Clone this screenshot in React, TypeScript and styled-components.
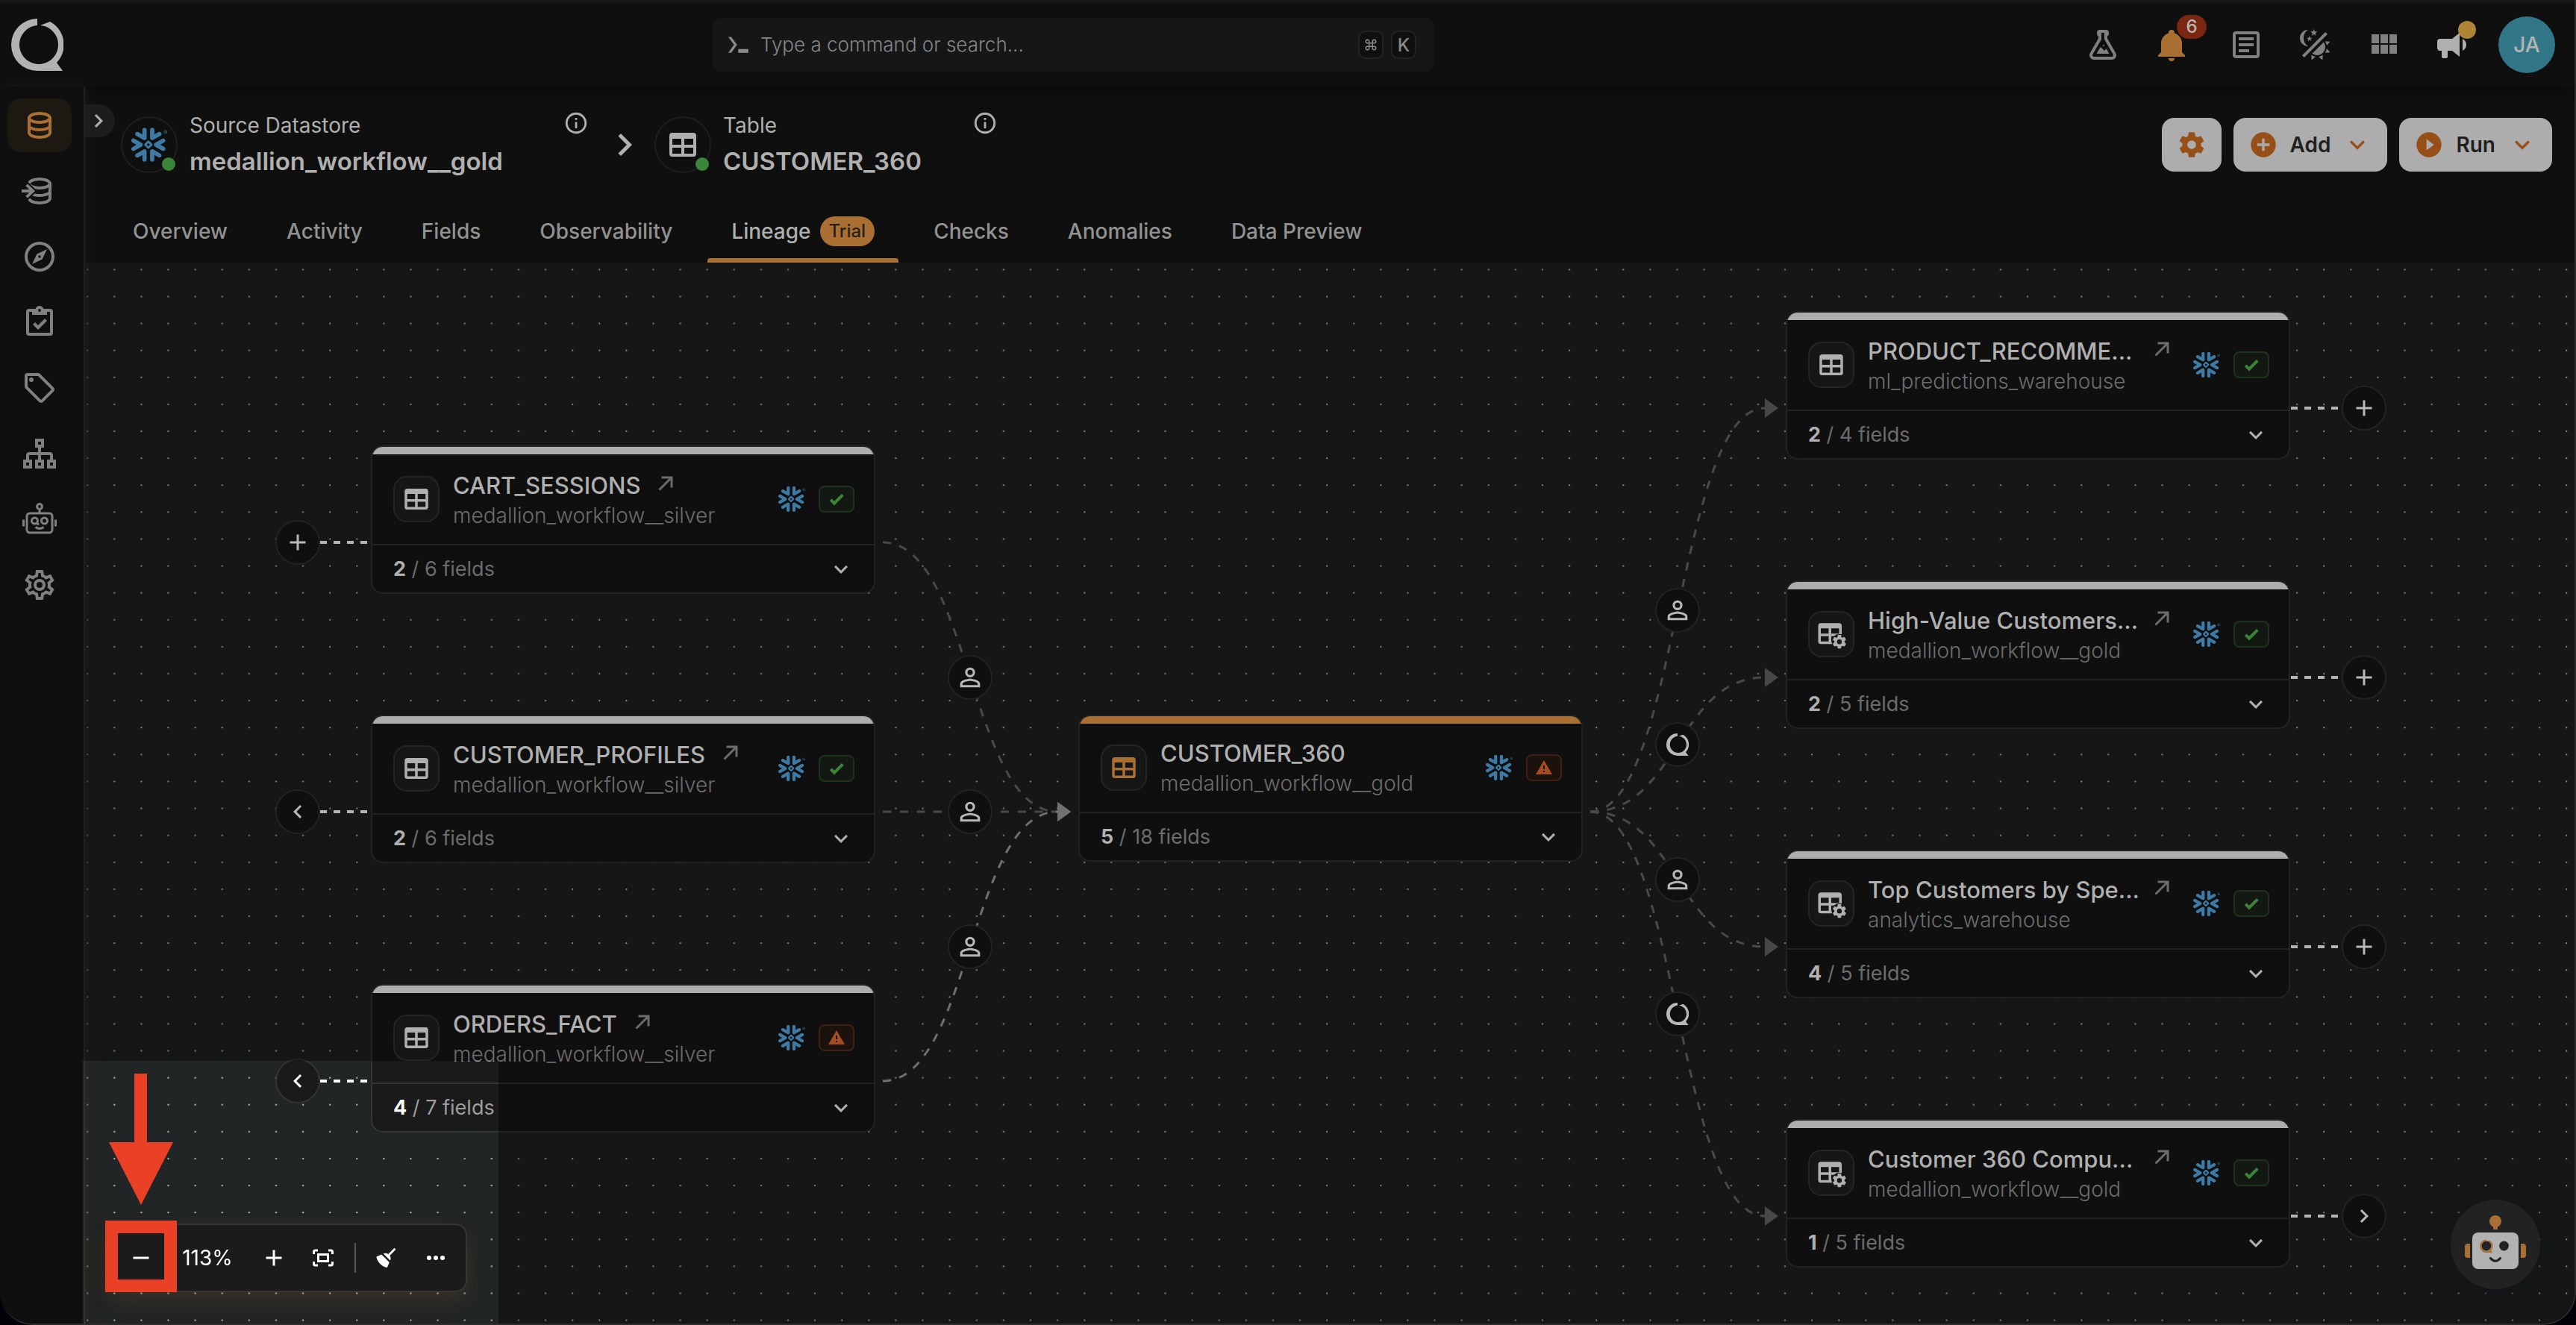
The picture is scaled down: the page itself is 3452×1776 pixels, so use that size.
import React from "react";
import styled, { createGlobalStyle, css } from "styled-components";
import { Command } from "lucide-react";
import { SiSnowflake } from "react-icons/si";

const c = {
  surface: "#0f0f0f",
  canvas: "#151716",
  line: "#222222",
  text: "#b0b0b0",
  muted: "#8a8a8a",
  faint: "#6c6c6c",
  accent: "#aa6f33",
  accentDeep: "#964f17",
  snow: "#3d7ba6",
  green: "#3b8438",
  rust: "#a44d22",
};

const GlobalStyle = createGlobalStyle`
  *, *::before, *::after { box-sizing: border-box; }
  html, body { margin: 0; background: #020208; }
  body, button, input { font-family: Inter, "Noto Sans", "Liberation Sans", sans-serif; }
  button { border: 0; padding: 0; margin: 0; background: none; color: inherit; cursor: pointer; }
  a { color: inherit; text-decoration: none; }
  svg { display: block; flex: none; }
`;

/* ---------- icons ---------- */

const paths = {
  database:
    "M12 3C7.58 3 4 4.79 4 7V17C4 19.21 7.59 21 12 21S20 19.21 20 17V7C20 4.79 16.42 3 12 3M18 17C18 17.5 15.87 19 12 19S6 17.5 6 17V14.77C7.61 15.55 9.72 16 12 16S16.39 15.55 18 14.77V17M18 12.45C16.7 13.4 14.42 14 12 14C9.58 14 7.3 13.4 6 12.45V9.64C7.47 10.47 9.61 11 12 11C14.39 11 16.53 10.47 18 9.64V12.45M12 9C8.13 9 6 7.5 6 7S8.13 5 12 5C15.87 5 18 6.5 18 7S15.87 9 12 9Z",
  compass:
    "M7,17L10.2,10.2L17,7L13.8,13.8L7,17M12,11.1A0.9,0.9 0 0,0 11.1,12A0.9,0.9 0 0,0 12,12.9A0.9,0.9 0 0,0 12.9,12A0.9,0.9 0 0,0 12,11.1M12,2A10,10 0 0,1 22,12A10,10 0 0,1 12,22A10,10 0 0,1 2,12A10,10 0 0,1 12,2M12,4A8,8 0 0,0 4,12A8,8 0 0,0 12,20A8,8 0 0,0 20,12A8,8 0 0,0 12,4Z",
  clipboard:
    "M19,3H14.82C14.4,1.84 13.3,1 12,1C10.7,1 9.6,1.84 9.18,3H5A2,2 0 0,0 3,5V19A2,2 0 0,0 5,21H19A2,2 0 0,0 21,19V5A2,2 0 0,0 19,3M12,3A1,1 0 0,1 13,4A1,1 0 0,1 12,5A1,1 0 0,1 11,4A1,1 0 0,1 12,3M7,7H17V5H19V19H5V5H7V7M7.5,13.5L9,12L11,14L15.5,9.5L17,11L11,17L7.5,13.5Z",
  tag: "M21.41 11.58L12.41 2.58A2 2 0 0 0 11 2H4A2 2 0 0 0 2 4V11A2 2 0 0 0 2.59 12.42L11.59 21.42A2 2 0 0 0 13 22A2 2 0 0 0 14.41 21.41L21.41 14.41A2 2 0 0 0 22 13A2 2 0 0 0 21.41 11.58M13 20L4 11V4H11L20 13M6.5 5A1.5 1.5 0 1 1 5 6.5A1.5 1.5 0 0 1 6.5 5Z",
  sitemap:
    "M9,2V8H11V11H5C3.89,11 3,11.89 3,13V16H1V22H7V16H5V13H11V16H9V22H15V16H13V13H19V16H17V22H23V16H21V13C21,11.89 20.11,11 19,11H13V8H15V2H9M11,4H13V6H11V4M3,18H5V20H3V18M11,18H13V20H11V18M19,18H21V20H19V18Z",
  cogOutline:
    "M12,8A4,4 0 0,1 16,12A4,4 0 0,1 12,16A4,4 0 0,1 8,12A4,4 0 0,1 12,8M12,10A2,2 0 0,0 10,12A2,2 0 0,0 12,14A2,2 0 0,0 14,12A2,2 0 0,0 12,10M10,22C9.75,22 9.54,21.82 9.5,21.58L9.13,18.93C8.5,18.68 7.96,18.34 7.44,17.94L4.95,18.95C4.73,19.03 4.46,18.95 4.34,18.73L2.34,15.27C2.21,15.05 2.27,14.78 2.46,14.63L4.57,12.97L4.5,12L4.57,11L2.46,9.37C2.27,9.22 2.21,8.95 2.34,8.73L4.34,5.27C4.46,5.05 4.73,4.96 4.95,5.05L7.44,6.05C7.96,5.66 8.5,5.32 9.13,5.07L9.5,2.42C9.54,2.18 9.75,2 10,2H14C14.25,2 14.46,2.18 14.5,2.42L14.87,5.07C15.5,5.32 16.04,5.66 16.56,6.05L19.05,5.05C19.27,4.96 19.54,5.05 19.66,5.27L21.66,8.73C21.79,8.95 21.73,9.22 21.54,9.37L19.43,11L19.5,12L19.43,13L21.54,14.63C21.73,14.78 21.79,15.05 21.66,15.27L19.66,18.73C19.54,18.95 19.27,19.04 19.05,18.95L16.56,17.95C16.04,18.34 15.5,18.68 14.87,18.93L14.5,21.58C14.46,21.82 14.25,22 14,22H10M11.25,4L10.88,6.61C9.68,6.86 8.62,7.5 7.85,8.39L5.44,7.35L4.69,8.65L6.8,10.2C6.4,11.37 6.4,12.64 6.8,13.8L4.68,15.36L5.43,16.66L7.86,15.62C8.63,16.5 9.68,17.14 10.87,17.38L11.24,20H12.76L13.13,17.39C14.32,17.14 15.37,16.5 16.14,15.62L18.57,16.66L19.32,15.36L17.2,13.81C17.6,12.64 17.6,11.37 17.2,10.2L19.31,8.65L18.56,7.35L16.15,8.39C15.38,7.5 14.32,6.86 13.12,6.62L12.75,4H11.25Z",
  cog: "M12,15.5A3.5,3.5 0 0,1 8.5,12A3.5,3.5 0 0,1 12,8.5A3.5,3.5 0 0,1 15.5,12A3.5,3.5 0 0,1 12,15.5M19.43,12.97C19.47,12.65 19.5,12.33 19.5,12C19.5,11.67 19.47,11.34 19.43,11L21.54,9.37C21.73,9.22 21.78,8.95 21.66,8.73L19.66,5.27C19.54,5.05 19.27,4.96 19.05,5.05L16.56,6.05C16.04,5.66 15.5,5.32 14.87,5.07L14.5,2.42C14.46,2.18 14.25,2 14,2H10C9.75,2 9.54,2.18 9.5,2.42L9.13,5.07C8.5,5.32 7.96,5.66 7.44,6.05L4.95,5.05C4.73,4.96 4.46,5.05 4.34,5.27L2.34,8.73C2.21,8.95 2.27,9.22 2.46,9.37L4.57,11C4.53,11.34 4.5,11.67 4.5,12C4.5,12.33 4.53,12.65 4.57,12.97L2.46,14.63C2.27,14.78 2.21,15.05 2.34,15.27L4.34,18.73C4.46,18.95 4.73,19.03 4.95,18.95L7.44,17.94C7.96,18.34 8.5,18.68 9.13,18.93L9.5,21.58C9.54,21.82 9.75,22 10,22H14C14.25,22 14.46,21.82 14.5,21.58L14.87,18.93C15.5,18.67 16.04,18.34 16.56,17.94L19.05,18.95C19.27,19.03 19.54,18.95 19.66,18.73L21.66,15.27C21.78,15.05 21.73,14.78 21.54,14.63L19.43,12.97Z",
  bell: "M21,19V20H3V19L5,17V11C5,7.9 7.03,5.17 10,4.29C10,4.19 10,4.1 10,4A2,2 0 0,1 12,2A2,2 0 0,1 14,4C14,4.1 14,4.19 14,4.29C16.97,5.17 19,7.9 19,11V17L21,19M14,21A2,2 0 0,1 12,23A2,2 0 0,1 10,21",
  table:
    "M5,4H19A2,2 0 0,1 21,6V18A2,2 0 0,1 19,20H5A2,2 0 0,1 3,18V6A2,2 0 0,1 5,4M5,8V12H11V8H5M13,8V12H19V8H13M5,14V18H11V14H5M13,14V18H19V14H13Z",
  textBox:
    "M5,3C3.89,3 3,3.89 3,5V19C3,20.11 3.89,21 5,21H19C20.11,21 21,20.11 21,19V5C21,3.89 20.11,3 19,3H5M5,5H19V19H5V5M7,7V9H17V7H7M7,11V13H17V11H7M7,15V17H14V15H7Z",
  module: "M16,5V11H21V5M10,11H15V5H10M16,18H21V12H16M10,18H15V12H10M4,18H9V12H4M4,11H9V5H4V11Z",
  bullhorn:
    "M12,8H4A2,2 0 0,0 2,10V14A2,2 0 0,0 4,16H5V20A1,1 0 0,0 6,21H8A1,1 0 0,0 9,20V16H12L17,20V4L12,8M21.5,12C21.5,13.71 20.54,15.26 19,16V8C20.53,8.75 21.5,10.3 21.5,12Z",
  flask:
    "M5,19A1,1 0 0,0 6,20H18A1,1 0 0,0 19,19C19,18.79 18.93,18.59 18.82,18.43L13,8.35V4H11V8.35L5.18,18.43C5.07,18.59 5,18.79 5,19M6,22A3,3 0 0,1 3,19C3,18.4 3.18,17.84 3.5,17.37L9,7.81V6A1,1 0 0,1 8,5V4A2,2 0 0,1 10,2H14A2,2 0 0,1 16,4V5A1,1 0 0,1 15,6V7.81L20.5,17.37C20.82,17.84 21,18.4 21,19A3,3 0 0,1 18,22H6M13,16L14.34,14.66L16.27,18H7.73L10.39,13.39L13,16M12.5,12A0.5,0.5 0 0,1 13,12.5A0.5,0.5 0 0,1 12.5,13A0.5,0.5 0 0,1 12,12.5A0.5,0.5 0 0,1 12.5,12Z",
  theme:
    "M7.5,2C5.71,3.15 4.5,5.18 4.5,7.5C4.5,9.82 5.71,11.85 7.53,13C4.46,13 2,10.54 2,7.5A5.5,5.5 0 0,1 7.5,2M19.07,3.5L20.5,4.93L4.93,20.5L3.5,19.07L19.07,3.5M12.89,5.93L11.41,5L9.97,6L10.39,4.3L9,3.24L10.75,3.12L11.33,1.47L12,3.1L13.73,3.13L12.38,4.26L12.89,5.93M9.59,9.54L8.43,8.81L7.31,9.59L7.65,8.27L6.56,7.44L7.92,7.35L8.37,6.06L8.88,7.33L10.24,7.36L9.19,8.23L9.59,9.54M19,13.5A5.5,5.5 0 0,1 13.5,19C12.28,19 11.15,18.6 10.24,17.93L17.93,10.24C18.6,11.15 19,12.28 19,13.5M14.6,20.08L17.37,18.93L17.13,22.28L14.6,20.08M18.93,17.38L20.08,14.61L22.28,17.15L18.93,17.38M20.08,12.42L18.94,9.64L22.28,9.88L20.08,12.42M9.63,18.93L12.4,20.08L9.87,22.27L9.63,18.93Z",
  prompt: "M2 4.5H4.9L10.4 12L4.9 19.5H2L7.5 12L2 4.5M11.5 16H21V19.5H11.5V16Z",
  plusCircle:
    "M17,13H13V17H11V13H7V11H11V7H13V11H17M12,2A10,10 0 0,0 2,12A10,10 0 0,0 12,22A10,10 0 0,0 22,12A10,10 0 0,0 12,2Z",
  playCircle: "M10,16.5V7.5L16,12M12,2A10,10 0 0,0 2,12A10,10 0 0,0 12,22A10,10 0 0,0 22,12A10,10 0 0,0 12,2Z",
  chevronDown: "M7.41,8.58L12,13.17L16.59,8.58L18,10L12,16L6,10L7.41,8.58Z",
  chevronRight: "M8.59,16.58L13.17,12L8.59,7.41L10,6L16,12L10,18L8.59,16.58Z",
  chevronLeft: "M15.41,16.58L10.83,12L15.41,7.41L14,6L8,12L14,18L15.41,16.58Z",
  plus: "M19,13H13V19H11V13H5V11H11V5H13V11H19V13Z",
  minus: "M19,13H5V11H19V13Z",
  check: "M9,20.42L2.79,14.21L5.62,11.38L9,14.77L18.88,4.88L21.71,7.71L9,20.42Z",
  alert: "M13 14H11V9H13M13 18H11V16H13M1 21H23L12 2L1 21Z",
  info: "M11,9H13V7H11M12,20C7.59,20 4,16.41 4,12C4,7.59 7.59,4 12,4C16.41,4 20,7.59 20,12C20,16.41 16.41,20 12,20M12,2A10,10 0 0,0 2,12A10,10 0 0,0 12,22A10,10 0 0,0 22,12A10,10 0 0,0 12,2M11,17H13V11H11V17Z",
  person:
    "M12,4A4,4 0 0,1 16,8A4,4 0 0,1 12,12A4,4 0 0,1 8,8A4,4 0 0,1 12,4M12,5.9A2.1,2.1 0 0,0 9.9,8A2.1,2.1 0 0,0 12,10.1A2.1,2.1 0 0,0 14.1,8A2.1,2.1 0 0,0 12,5.9M12,13C14.67,13 20,14.33 20,17V20H4V17C4,14.33 9.33,13 12,13M12,14.9C9.03,14.9 5.9,16.36 5.9,17V18.1H18.1V17C18.1,16.36 14.97,14.9 12,14.9Z",
  dots: "M16,12A2,2 0 0,1 18,10A2,2 0 0,1 20,12A2,2 0 0,1 18,14A2,2 0 0,1 16,12M10,12A2,2 0 0,1 12,10A2,2 0 0,1 14,12A2,2 0 0,1 12,14A2,2 0 0,1 10,12M4,12A2,2 0 0,1 6,10A2,2 0 0,1 8,12A2,2 0 0,1 6,14A2,2 0 0,1 4,12Z",
  broom:
    "M19.36,2.72L20.78,4.14L15.06,9.85C16.13,11.39 16.28,13.24 15.38,14.44L9.06,8.12C10.26,7.22 12.11,7.37 13.65,8.44L19.36,2.72M5.93,17.57C3.92,15.56 2.69,13.16 2.35,10.92L7.23,8.83L14.67,16.27L12.58,21.15C10.34,20.81 7.94,19.58 5.93,17.57Z",
};

type IconName = keyof typeof paths;

const Icon = ({ name, size = 48 }: { name: IconName; size?: number }) => (
  <svg width={size} height={size} viewBox="0 0 24 24" fill="currentColor" aria-hidden="true">
    <path d={paths[name]} />
  </svg>
);

const ImportIcon = () => (
  <svg width="48" height="48" viewBox="0 0 24 24" fill="currentColor" aria-hidden="true">
    <path d={paths.database} />
    <path d="M3 7.2H6.1V17H3z" fill={c.surface} />
    <path
      d="M0 11H5.2L2.6 8.6L4 7.2L9 12L4 16.8L2.6 15.4L5.2 13H0z"
      stroke={c.surface}
      strokeWidth="2"
      style={{ paintOrder: "stroke" }}
    />
  </svg>
);

const BotOutlineIcon = () => (
  <svg width="48" height="48" viewBox="0 0 48 48" fill="none" stroke="currentColor" strokeWidth="3" aria-hidden="true">
    <circle cx="24" cy="7" r="3.4" />
    <path d="M24 10.5V16" />
    <rect x="7" y="16" width="34" height="26" rx="4" />
    <circle cx="17.5" cy="26" r="4" />
    <path d="M20 28.5L23 31.5" />
    <circle cx="30.5" cy="26" r="4" />
    <path d="M18.5 34.5Q24 38.5 29.5 34.5" />
    <path d="M2.5 24.5V33.5M45.5 24.5V33.5" />
  </svg>
);

const TableCogIcon = ({ size }: { size: number }) => (
  <svg width={size} height={size} viewBox="0 0 24 24" fill="currentColor" aria-hidden="true">
    <path d={paths.table} transform="translate(-1 -0.5)" />
    <circle cx="18.2" cy="17.8" r="5.9" fill={c.canvas} />
    <path d={paths.cog} transform="translate(12 11.6) scale(0.52)" />
  </svg>
);

const QLogo = ({ size }: { size: number }) => (
  <svg width={size} height={size} viewBox="0 0 70 70" fill="currentColor" aria-hidden="true">
    <path d="M35 0A35 35 0 0 0 35 70H69L61 59A35 35 0 0 0 52 4L39 9A26 26 0 1 1 35 9Z" />
  </svg>
);

const LinkArrow = () => (
  <svg width="36" height="36" viewBox="0 0 36 36" fill="none" stroke="currentColor" strokeWidth="3" aria-hidden="true">
    <path d="M9.500 26.500L26 10M12.500 10H26V23.500" />
  </svg>
);

const FitIcon = () => (
  <svg width="36" height="36" viewBox="0 0 36 36" fill="none" stroke="currentColor" strokeWidth="3" aria-hidden="true">
    <path d="M5.500 13V10Q5.500 8 7.500 8H11M25 8H28.500Q30.500 8 30.500 10V13M30.500 23V26Q30.500 28 28.500 28H25M11 28H7.500Q5.500 28 5.500 26V23" />
    <rect x="11.500" y="13.500" width="13" height="9" />
  </svg>
);

const BotFace = () => (
  <svg width="120" height="120" viewBox="0 0 120 120" aria-hidden="true">
    <g fill={c.accent}>
      <circle cx="60" cy="29" r="8" />
      <path d="M57 35h6v5h-6z" />
      <path d="M26 59v19h-3a4 4 0 0 1-4-4V63a4 4 0 0 1 4-4z" />
      <path d="M94 59v19h3a4 4 0 0 0 4-4V63a4 4 0 0 0-4-4z" />
    </g>
    <rect x="29" y="44" width="62" height="49" rx="8" fill="#b2b2b2" />
    <g transform="translate(39 53.500) scale(0.25)" fill={c.accent}>
      <path d="M35 0A35 35 0 0 0 35 70H69L61 59A35 35 0 0 0 52 4L39 9A26 26 0 1 1 35 9Z" />
    </g>
    <circle cx="48" cy="62" r="6.400" fill="#222" />
    <circle cx="71.500" cy="62" r="6.400" fill="#222" />
    <path d="M53.500 78.500Q60 86 66.500 78.500" fill="none" stroke="#222" strokeWidth="3.200" strokeLinecap="round" />
  </svg>
);

/* ---------- shell ---------- */

const Shell = styled.div`
  position: relative;
  display: flex;
  flex-direction: column;
  height: 100vh;
  min-height: 1200px;
  overflow: hidden;
  background: ${c.surface};
  border: solid #2c2c2c;
  border-width: 0 2px 2px 0;
  border-radius: 0 0 44px 44px;
`;

const TopBar = styled.header`
  position: relative;
  display: grid;
  grid-template-columns: 955fr 967fr 1528fr;
  align-items: center;
  flex: none;
  height: 116px;
  border-top: 4px solid ${c.canvas};
  box-shadow: 0 2px 12px #090909;
`;

const Brand = styled.a`
  display: flex;
  padding-left: 15px;
  color: #b2b2b2;
`;

const SearchBox = styled.label`
  display: flex;
  align-items: center;
  gap: 10px;
  height: 72px;
  padding: 0 24px 0 18px;
  border-radius: 12px;
  background: ${c.canvas};
  color: ${c.muted};
`;

const SearchInput = styled.input`
  flex: 1;
  min-width: 0;
  padding: 0 0 0 2px;
  border: 0;
  outline: 0;
  background: none;
  color: ${c.text};
  font-size: 26px;
  font-weight: 300;
  line-height: 40px;
  &::placeholder {
    color: #868686;
    opacity: 1;
  }
`;

const Key = styled.kbd`
  display: flex;
  align-items: center;
  justify-content: center;
  width: 34px;
  height: 38px;
  border: 2px solid ${c.line};
  border-radius: 10px;
  background: ${c.surface};
  font-family: inherit;
  font-size: 24px;
  font-weight: 500;
`;

const TopActions = styled.nav`
  display: flex;
  align-items: center;
  justify-content: flex-end;
  padding-right: 26px;
  color: #808080;
`;

const TopAction = styled.button<{ $tone?: string }>`
  position: relative;
  display: flex;
  justify-content: center;
  width: 92px;
  ${(p) => p.$tone && css`color: ${p.$tone};`}
`;

const CountBadge = styled.span`
  position: absolute;
  top: -16px;
  left: 53px;
  width: 40px;
  border-radius: 16px;
  background: #792711;
  color: #b8b8b8;
  font-size: 24px;
  font-weight: 500;
  line-height: 32px;
`;

const NoticeDot = styled.span`
  position: absolute;
  top: -8px;
  left: 54px;
  width: 24px;
  height: 24px;
  border-radius: 50%;
  background: #ae8436;
`;

const Avatar = styled.button`
  width: 76px;
  height: 76px;
  margin-left: 16px;
  border-radius: 50%;
  background: #327788;
  color: #b4b4b4;
  font-size: 28px;
  font-weight: 500;
`;

const BellSlot = styled.div`
  padding-right: 8px;
`;

const Body = styled.div`
  display: flex;
  flex: 1;
  min-height: 0;
`;

const SideBar = styled.nav`
  display: flex;
  flex-direction: column;
  flex: none;
  gap: 16px;
  width: 114px;
  padding: 16px 16px 16px 10px;
  border-right: 2px solid #222120;
  box-shadow: 2px 0 16px #1f1914;
  background: ${c.surface};
  z-index: 1;
`;

const SideItem = styled.button<{ $active?: boolean }>`
  display: flex;
  align-items: center;
  justify-content: center;
  height: 72px;
  border-radius: 18px;
  color: ${(p) => (p.$active ? c.accent : "#808080")};
  background: ${(p) => (p.$active ? "#1e1812" : "transparent")};
`;

const Main = styled.main`
  display: flex;
  flex-direction: column;
  flex: 1;
  min-width: 0;
`;

/* ---------- page header ---------- */

const PageHeader = styled.section`
  position: relative;
  flex: none;
  height: 236px;
  padding: 40px 30px 0 48px;
`;

const ExpandTab = styled.button`
  position: absolute;
  top: 24px;
  left: 0;
  display: flex;
  align-items: center;
  width: 40px;
  height: 44px;
  border-radius: 0 22px 22px 0;
  background: #1d1d1d;
  color: ${c.text};
  z-index: 2;
`;

const HeaderRow = styled.div`
  display: flex;
  align-items: center;
  justify-content: space-between;
  height: 76px;
`;

const Crumbs = styled.div`
  display: flex;
  align-items: center;
  gap: 10px;
  color: ${c.text};
`;

const Crumb = styled.div`
  display: flex;
  align-items: center;
  gap: 16px;
  height: 76px;
  padding-right: 8px;
`;

const CrumbBadge = styled.div`
  position: relative;
  display: grid;
  place-items: center;
  width: 76px;
  height: 76px;
  border: 2px solid #1e1e1e;
  border-radius: 50%;
`;

const OnlineDot = styled.span`
  position: absolute;
  right: 1px;
  bottom: 1px;
  width: 18px;
  height: 18px;
  border-radius: 50%;
  background: ${c.green};
`;

const CrumbText = styled.div<{ $width: number }>`
  min-width: ${(p) => p.$width}px;
`;

const CrumbKind = styled.div`
  font-size: 28px;
  line-height: 44px;
`;

const CrumbName = styled.h1`
  margin: 0;
  font-size: 33px;
  font-weight: 600;
  line-height: 52px;
`;

const InfoButton = styled.button`
  align-self: flex-start;
  margin-top: -8px;
  color: ${c.text};
`;

const ButtonRow = styled.div`
  display: flex;
  gap: 16px;
`;

const ActionButton = styled.button`
  display: flex;
  align-items: center;
  gap: 16px;
  height: 72px;
  padding: 0 20px;
  border-radius: 16px;
  background: #adadad;
  color: ${c.accentDeep};
  font-size: 28px;
  font-weight: 600;
  span {
    color: #202020;
  }
`;

const Tabs = styled.nav`
  position: absolute;
  left: 32px;
  bottom: 0;
  display: flex;
  gap: 15px;
`;

const Tab = styled.a<{ $active?: boolean }>`
  position: relative;
  display: flex;
  align-items: center;
  gap: 12px;
  height: 88px;
  padding: 4px 32px 0;
  color: #929292;
  font-size: 28px;
  font-weight: 500;
  line-height: 40px;
  ${(p) =>
    p.$active &&
    css`
      color: ${c.text};
      &::after {
        content: "";
        position: absolute;
        left: 0;
        right: 0;
        bottom: 0;
        height: 6px;
        border-radius: 4px 4px 0 0;
        background: ${c.accent};
      }
    `}
`;

const TrialPill = styled.span`
  padding: 0 12px;
  border-radius: 20px;
  background: ${c.accent};
  color: #26211d;
  font-size: 24px;
  line-height: 40px;
`;

/* ---------- canvas ---------- */

const Canvas = styled.section`
  position: relative;
  flex: 1;
  min-height: 0;
  overflow: hidden;
  background: ${c.canvas};
`;

const Backdrop = styled.svg`
  position: absolute;
  inset: 0;
  width: 100%;
  height: 100%;
`;

const Node = styled.article<{ $x: number; $y: number }>`
  position: absolute;
  left: ${(p) => p.$x}px;
  top: ${(p) => p.$y}px;
  width: 676px;
  overflow: hidden;
  border: 2px solid ${c.line};
  border-radius: 16px;
  background: ${c.surface};
`;

const NodeStripe = styled.div<{ $current?: boolean }>`
  height: 10px;
  background: ${(p) => (p.$current ? c.accent : "#adadad")};
`;

const NodeHead = styled.div`
  display: flex;
  align-items: center;
  padding: 20px 26px 20px 28px;
  border-bottom: 2px solid ${c.line};
`;

const NodeIcon = styled.div<{ $current?: boolean }>`
  display: grid;
  place-items: center;
  width: 62px;
  height: 62px;
  margin-right: 18px;
  border: 2px solid #232424;
  border-radius: 18px;
  background: ${c.canvas};
  color: ${(p) => (p.$current ? c.accent : c.text)};
`;

const NodeText = styled.div`
  flex: 1;
  min-width: 0;
`;

const TitleRow = styled.div`
  display: flex;
  align-items: center;
  gap: 16px;
`;

const NodeTitle = styled.h2<{ $clipped?: boolean; $current?: boolean }>`
  margin: 0;
  ${(p) => p.$clipped && css`width: 360px;`}
  ${(p) => p.$current && css`padding-bottom: 2px;`}
  color: ${c.text};
  font-size: 31px;
  font-weight: 500;
  line-height: ${(p) => (p.$current ? 40 : 44)}px;
  white-space: nowrap;
`;

const TitleLink = styled.a`
  height: 42px;
  color: ${c.faint};
`;

const NodeStore = styled.div`
  color: ${c.faint};
  font-size: 28px;
  font-weight: 300;
  line-height: 36px;
`;

const NodeMarks = styled.div`
  display: flex;
  align-items: center;
  gap: 18px;
  color: ${c.snow};
`;

const StatusMark = styled.span<{ $warn?: boolean }>`
  display: grid;
  place-items: center;
  width: 48px;
  height: 36px;
  border: 2px solid ${(p) => (p.$warn ? "#3f2113" : "#1c341b")};
  border-radius: 8px;
  background: ${(p) => (p.$warn ? "#1c120d" : "#131813")};
  color: ${(p) => (p.$warn ? c.rust : c.green)};
`;

const NodeFoot = styled.button`
  display: flex;
  align-items: center;
  justify-content: space-between;
  width: 100%;
  height: 63px;
  padding: 0 26px 0 28px;
  color: ${c.faint};
  font-size: 27px;
  b {
    color: ${c.text};
    font-weight: 700;
  }
  svg {
    color: ${c.text};
  }
`;

const Bubble = styled.button<{ $x: number; $y: number }>`
  position: absolute;
  left: ${(p) => p.$x - 30}px;
  top: ${(p) => p.$y - 30}px;
  display: grid;
  place-items: center;
  width: 60px;
  height: 60px;
  border: 2px solid ${c.line};
  border-radius: 50%;
  background: ${c.surface};
  color: #b8b8b8;
`;

/* ---------- floating pieces ---------- */

const Spotlight = styled.div`
  position: absolute;
  left: 110px;
  bottom: -2px;
  width: 558px;
  height: 354px;
  background: rgba(210, 210, 255, 0.025);
  backdrop-filter: brightness(1.45);
  pointer-events: none;
  z-index: 3;
`;

const ZoomBar = styled.div`
  position: absolute;
  left: 32px;
  bottom: 42px;
  display: flex;
  align-items: center;
  height: 92px;
  padding: 0 12px 0 13px;
  border: 2px solid #363636;
  border-radius: 16px;
  background: #1b1b1b;
  box-shadow: 0 12px 28px rgba(170, 110, 50, 0.16);
  color: #ffffff;
  z-index: 4;
`;

const ZoomButton = styled.button<{ $spaced?: boolean }>`
  display: grid;
  place-items: center;
  width: 56px;
  height: 56px;
  ${(p) => p.$spaced && css`margin-left: 10px;`}
`;

const ZoomLevel = styled.output`
  width: 122px;
  font-size: 28px;
  font-weight: 400;
  text-align: center;
`;

const Separator = styled.span`
  width: 2px;
  height: 40px;
  margin: 0 13px 0 14px;
  background: #555555;
`;

const Highlight = styled.div`
  position: absolute;
  left: 27px;
  bottom: 42px;
  width: 96px;
  height: 96px;
  border: 17px solid #ea4025;
  pointer-events: none;
  z-index: 5;
`;

const Pointer = styled.svg`
  position: absolute;
  left: 32px;
  bottom: 158px;
  z-index: 5;
`;

const BotButton = styled.button`
  position: absolute;
  right: 46px;
  bottom: 46px;
  border-radius: 50%;
  background: #222222;
  box-shadow: 0 8px 24px #14151a;
`;

/* ---------- data ---------- */

const sideItems: { label: string; icon: React.ReactNode }[] = [
  { label: "Source Datastores", icon: <Icon name="database" /> },
  { label: "Enrichment Datastores", icon: <ImportIcon /> },
  { label: "Explore", icon: <Icon name="compass" /> },
  { label: "Library", icon: <Icon name="clipboard" /> },
  { label: "Tags", icon: <Icon name="tag" /> },
  { label: "Flows", icon: <Icon name="sitemap" /> },
  { label: "Agent", icon: <BotOutlineIcon /> },
  { label: "Settings", icon: <Icon name="cogOutline" /> },
];

const tabs = ["Overview", "Activity", "Fields", "Observability", "Lineage", "Checks", "Anomalies", "Data Preview"];

interface LineageNode {
  x: number;
  y: number;
  title: string;
  store: string;
  used: number;
  total: number;
  kind?: "table" | "computed";
  warn?: boolean;
  clipped?: boolean;
  current?: boolean;
  handle?: "plus" | "chevronLeft" | "chevronRight";
}

const COL = [383, 1331, 2279];
const GOLD = "medallion_workflow__gold";
const SILVER = "medallion_workflow__silver";

const nodes: LineageNode[] = [
  { x: COL[0], y: 245, title: "CART_SESSIONS", store: SILVER, used: 2, total: 6, handle: "plus" },
  { x: COL[0], y: 606, title: "CUSTOMER_PROFILES", store: SILVER, used: 2, total: 6, handle: "chevronLeft" },
  { x: COL[0], y: 967, title: "ORDERS_FACT", store: SILVER, used: 4, total: 7, warn: true, handle: "chevronLeft" },
  { x: COL[1], y: 606, title: "CUSTOMER_360", store: GOLD, used: 5, total: 18, warn: true, current: true },
  { x: COL[2], y: 65, title: "PRODUCT_RECOMME...", store: "ml_predictions_warehouse", used: 2, total: 4, clipped: true, handle: "plus" },
  { x: COL[2], y: 426, title: "High-Value Customers...", store: GOLD, used: 2, total: 5, kind: "computed", clipped: true, handle: "plus" },
  { x: COL[2], y: 787, title: "Top Customers by Spe...", store: "analytics_warehouse", used: 4, total: 5, kind: "computed", clipped: true, handle: "plus" },
  { x: COL[2], y: 1148, title: "Customer 360 Compu...", store: GOLD, used: 1, total: 5, kind: "computed", clipped: true, handle: "chevronRight" },
];

const PORT = 130;

const edges = [
  { x1: 1069, y1: 375, x2: 1303, y2: 736, tone: "#484949", head: "#707070", by: "person" },
  { x1: 1069, y1: 736, x2: 1303, y2: 736, tone: "#484949", head: "#707070", by: "person" },
  { x1: 1069, y1: 1097, x2: 1303, y2: 736, tone: "#6e6f6f", head: "#707070", by: "person" },
  { x1: 2017, y1: 736, x2: 2251, y2: 195, tone: "#484949", head: "#484848", by: "person" },
  { x1: 2017, y1: 736, x2: 2251, y2: 556, tone: "#484949", head: "#484848", by: "logo" },
  { x1: 2017, y1: 736, x2: 2251, y2: 917, tone: "#484949", head: "#484848", by: "person" },
  { x1: 2017, y1: 736, x2: 2251, y2: 1278, tone: "#484949", head: "#484848", by: "logo" },
];

const PITCH = 32 * 1.1284;

const Graph = () => (
  <Backdrop aria-hidden="true">
    <defs>
      <pattern id="grid" x="2" y="8.300" width={PITCH} height={PITCH} patternUnits="userSpaceOnUse">
        <circle cx="1.200" cy="1.200" r="1.100" fill="#8a8a8a" />
      </pattern>
    </defs>
    <rect width="100%" height="100%" fill="url(#grid)" />
    {edges.map((e, i) => {
      const mid = (e.x1 + e.x2) / 2;
      return (
        <g key={i}>
          <path
            d={`M${e.x1} ${e.y1}C${mid} ${e.y1} ${mid} ${e.y2} ${e.x2} ${e.y2}`}
            fill="none"
            stroke={e.tone}
            strokeWidth="3"
            strokeDasharray="11.300 11.300"
          />
          <path d={`M${e.x2} ${e.y2 - 13}L${e.x2 + 18} ${e.y2}L${e.x2} ${e.y2 + 13}Z`} fill={e.head} />
        </g>
      );
    })}
    {nodes
      .filter((n) => n.handle)
      .map((n) => {
        const left = n.x === COL[0];
        const from = left ? n.x - 68 : n.x + 677;
        return (
          <path
            key={n.title}
            d={`M${from} ${n.y + PORT}h64`}
            stroke="#b4b4b4"
            strokeWidth="4"
            strokeDasharray="9 9"
          />
        );
      })}
  </Backdrop>
);

const NodeCard = ({ node }: { node: LineageNode }) => (
  <Node $x={node.x} $y={node.y}>
    <NodeStripe $current={node.current} />
    <NodeHead>
      <NodeIcon $current={node.current}>
        {node.kind === "computed" ? <TableCogIcon size={42} /> : <Icon name="table" size={42} />}
      </NodeIcon>
      <NodeText>
        <TitleRow>
          <NodeTitle $clipped={node.clipped} $current={node.current}>
            {node.title}
          </NodeTitle>
          {!node.current && (
            <TitleLink href="#" aria-label={`Open ${node.title}`}>
              <LinkArrow />
            </TitleLink>
          )}
        </TitleRow>
        <NodeStore>{node.store}</NodeStore>
      </NodeText>
      <NodeMarks>
        <SiSnowflake size={36} />
        <StatusMark $warn={node.warn}>
          <Icon name={node.warn ? "alert" : "check"} size={24} />
        </StatusMark>
      </NodeMarks>
    </NodeHead>
    <NodeFoot>
      <span>
        <b>{node.used}</b> / {node.total} fields
      </span>
      <Icon name="chevronDown" size={36} />
    </NodeFoot>
  </Node>
);

export default function App() {
  return (
    <Shell>
      <GlobalStyle />
      <TopBar>
        <Brand href="#" aria-label="Home">
          <QLogo size={70} />
        </Brand>
        <SearchBox>
          <Icon name="prompt" size={34} />
          <SearchInput type="text" aria-label="Command" placeholder="Type a command or search..." />
          <Key>
            <Command size={18} />
          </Key>
          <Key>K</Key>
        </SearchBox>
        <TopActions>
          <TopAction aria-label="Labs">
            <Icon name="flask" />
          </TopAction>
          <BellSlot>
            <TopAction aria-label="Notifications" $tone={c.accent}>
              <Icon name="bell" />
              <CountBadge>6</CountBadge>
            </TopAction>
          </BellSlot>
          <TopAction aria-label="Docs">
            <Icon name="textBox" />
          </TopAction>
          <TopAction aria-label="Theme">
            <Icon name="theme" />
          </TopAction>
          <TopAction aria-label="Apps">
            <Icon name="module" />
          </TopAction>
          <TopAction aria-label="Announcements" $tone={c.text}>
            <Icon name="bullhorn" />
            <NoticeDot />
          </TopAction>
          <Avatar>JA</Avatar>
        </TopActions>
      </TopBar>

      <Body>
        <SideBar>
          {sideItems.map((item, i) => (
            <SideItem key={item.label} aria-label={item.label} $active={i === 0}>
              {item.icon}
            </SideItem>
          ))}
        </SideBar>

        <Main>
          <PageHeader>
            <ExpandTab aria-label="Expand tree">
              <Icon name="chevronRight" size={36} />
            </ExpandTab>
            <HeaderRow>
              <Crumbs>
                <Crumb>
                  <CrumbBadge>
                    <SiSnowflake size={48} color={c.snow} />
                    <OnlineDot />
                  </CrumbBadge>
                  <CrumbText $width={485}>
                    <CrumbKind>Source Datastore</CrumbKind>
                    <CrumbName>medallion_workflow__gold</CrumbName>
                  </CrumbText>
                  <InfoButton aria-label="Datastore details">
                    <Icon name="info" size={34} />
                  </InfoButton>
                </Crumb>
                <Icon name="chevronRight" size={60} />
                <Crumb>
                  <CrumbBadge>
                    <Icon name="table" size={48} />
                    <OnlineDot />
                  </CrumbBadge>
                  <CrumbText $width={318}>
                    <CrumbKind>Table</CrumbKind>
                    <CrumbName>CUSTOMER_360</CrumbName>
                  </CrumbText>
                  <InfoButton aria-label="Table details">
                    <Icon name="info" size={34} />
                  </InfoButton>
                </Crumb>
              </Crumbs>
              <ButtonRow>
                <ActionButton aria-label="Settings">
                  <Icon name="cog" size={40} />
                </ActionButton>
                <ActionButton>
                  <Icon name="plusCircle" size={40} />
                  <span>Add</span>
                  <Icon name="chevronDown" size={40} />
                </ActionButton>
                <ActionButton>
                  <Icon name="playCircle" size={40} />
                  <span>Run</span>
                  <Icon name="chevronDown" size={40} />
                </ActionButton>
              </ButtonRow>
            </HeaderRow>
            <Tabs>
              {tabs.map((t) => (
                <Tab key={t} href="#" $active={t === "Lineage"}>
                  {t}
                  {t === "Lineage" && <TrialPill>Trial</TrialPill>}
                </Tab>
              ))}
            </Tabs>
          </PageHeader>

          <Canvas>
            <Graph />
            {nodes.map((n) => (
              <NodeCard key={n.title} node={n} />
            ))}
            {nodes.map(
              (n) =>
                n.handle && (
                  <Bubble
                    key={n.title}
                    $x={n.x === COL[0] ? 285 : 3054}
                    $y={n.y + PORT}
                    aria-label={`Expand ${n.title}`}
                  >
                    <Icon name={n.handle} size={36} />
                  </Bubble>
                )
            )}
            {edges.map((e, i) => (
              <Bubble key={i} $x={(e.x1 + e.x2) / 2} $y={Math.round((e.y1 + e.y2) / 2)} aria-label="Edge details">
                {e.by === "person" ? <Icon name="person" size={40} /> : <QLogo size={30} />}
              </Bubble>
            ))}
            <ZoomBar>
              <ZoomButton aria-label="Zoom out">
                <Icon name="minus" size={36} />
              </ZoomButton>
              <ZoomLevel>113%</ZoomLevel>
              <ZoomButton aria-label="Zoom in">
                <Icon name="plus" size={36} />
              </ZoomButton>
              <ZoomButton aria-label="Fit view" $spaced>
                <FitIcon />
              </ZoomButton>
              <Separator />
              <ZoomButton aria-label="Clear">
                <Icon name="broom" size={34} />
              </ZoomButton>
              <ZoomButton aria-label="More" $spaced>
                <Icon name="dots" size={36} />
              </ZoomButton>
            </ZoomBar>
            <Highlight />
            <Pointer width="86" height="178" viewBox="0 0 86 178" aria-hidden="true">
              <path d="M34 1H51V93H86L43 177L0 93H34Z" fill="#ea4025" />
            </Pointer>
            <BotButton aria-label="Assistant">
              <BotFace />
            </BotButton>
          </Canvas>
        </Main>
      </Body>
      <Spotlight />
    </Shell>
  );
}
